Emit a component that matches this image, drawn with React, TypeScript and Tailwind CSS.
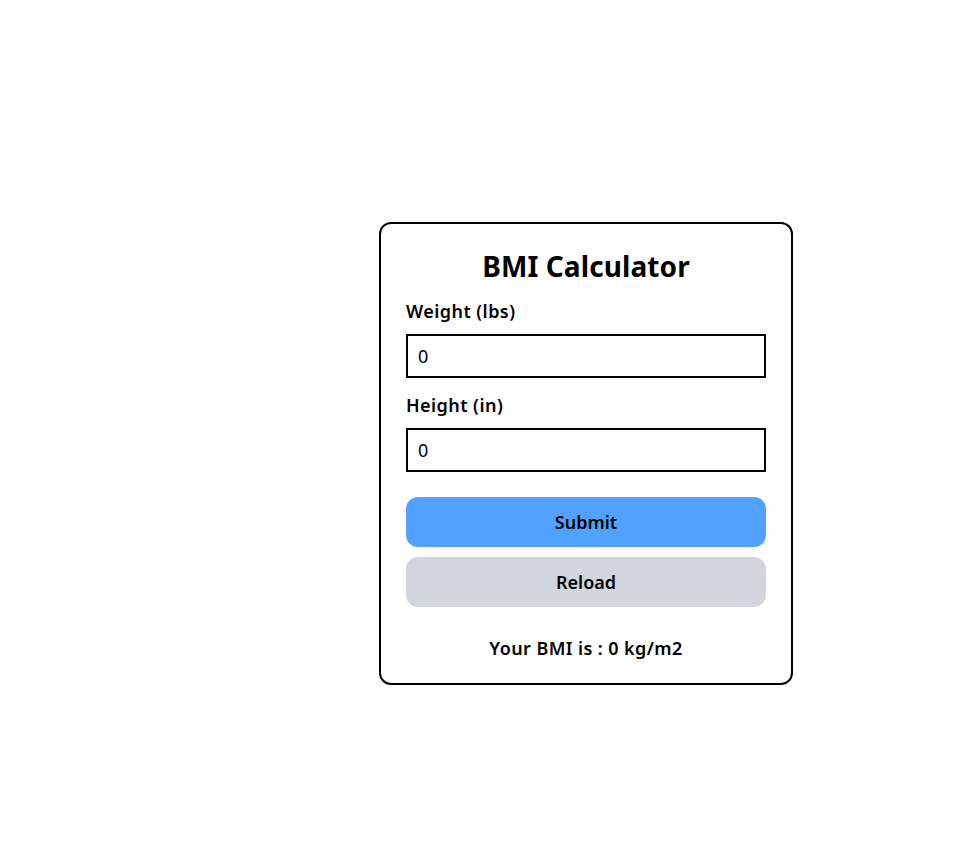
import { useState } from 'react'

export default function App() {
  const [weight, setWeight] = useState('0')
  const [height, setHeight] = useState('0')
  const [bmi, setBmi] = useState('0')

  const calc = () => {
    const w = parseFloat(weight)
    const h = parseFloat(height)
    if (!w || !h) {
      setBmi('0')
      return
    }
    setBmi(((w / (h * h)) * 703).toFixed(1))
  }

  return (
    <div className="min-h-screen bg-white text-black" style={{ fontFamily: '"Noto Sans", sans-serif' }}>
      <div className="pl-[379px] pt-[222px]">
        <div className="w-[414px] rounded-xl border-2 border-black px-[25px] pt-6 pb-[21px]">
          <h1 className="text-center text-[28px] leading-9 font-bold tracking-[0.1px]">BMI Calculator</h1>

          <label className="mt-[13px] block text-lg leading-7 font-semibold tracking-[0.45px]">Weight (lbs)</label>
          <input
            type="text"
            value={weight}
            onChange={(e) => setWeight(e.target.value)}
            className="mt-[9px] block h-11 w-full border-2 border-black px-[10px] text-lg outline-none"
          />

          <label className="mt-[13px] block text-lg leading-7 font-semibold tracking-[0.45px]">Height (in)</label>
          <input
            type="text"
            value={height}
            onChange={(e) => setHeight(e.target.value)}
            className="mt-[9px] block h-11 w-full border-2 border-black px-[10px] text-lg outline-none"
          />

          <button
            onClick={calc}
            className="mt-[25px] block h-[50px] w-full rounded-xl bg-blue-400 text-lg font-semibold"
          >
            Submit
          </button>
          <button
            onClick={() => window.location.reload()}
            className="mt-[10px] block h-[50px] w-full rounded-xl bg-gray-300 text-lg font-semibold"
          >
            Reload
          </button>

          <p className="mt-[27px] text-center text-lg leading-7 font-semibold tracking-[0.4px]">
            Your BMI is : {bmi} kg/m2
          </p>
        </div>
      </div>
    </div>
  )
}
